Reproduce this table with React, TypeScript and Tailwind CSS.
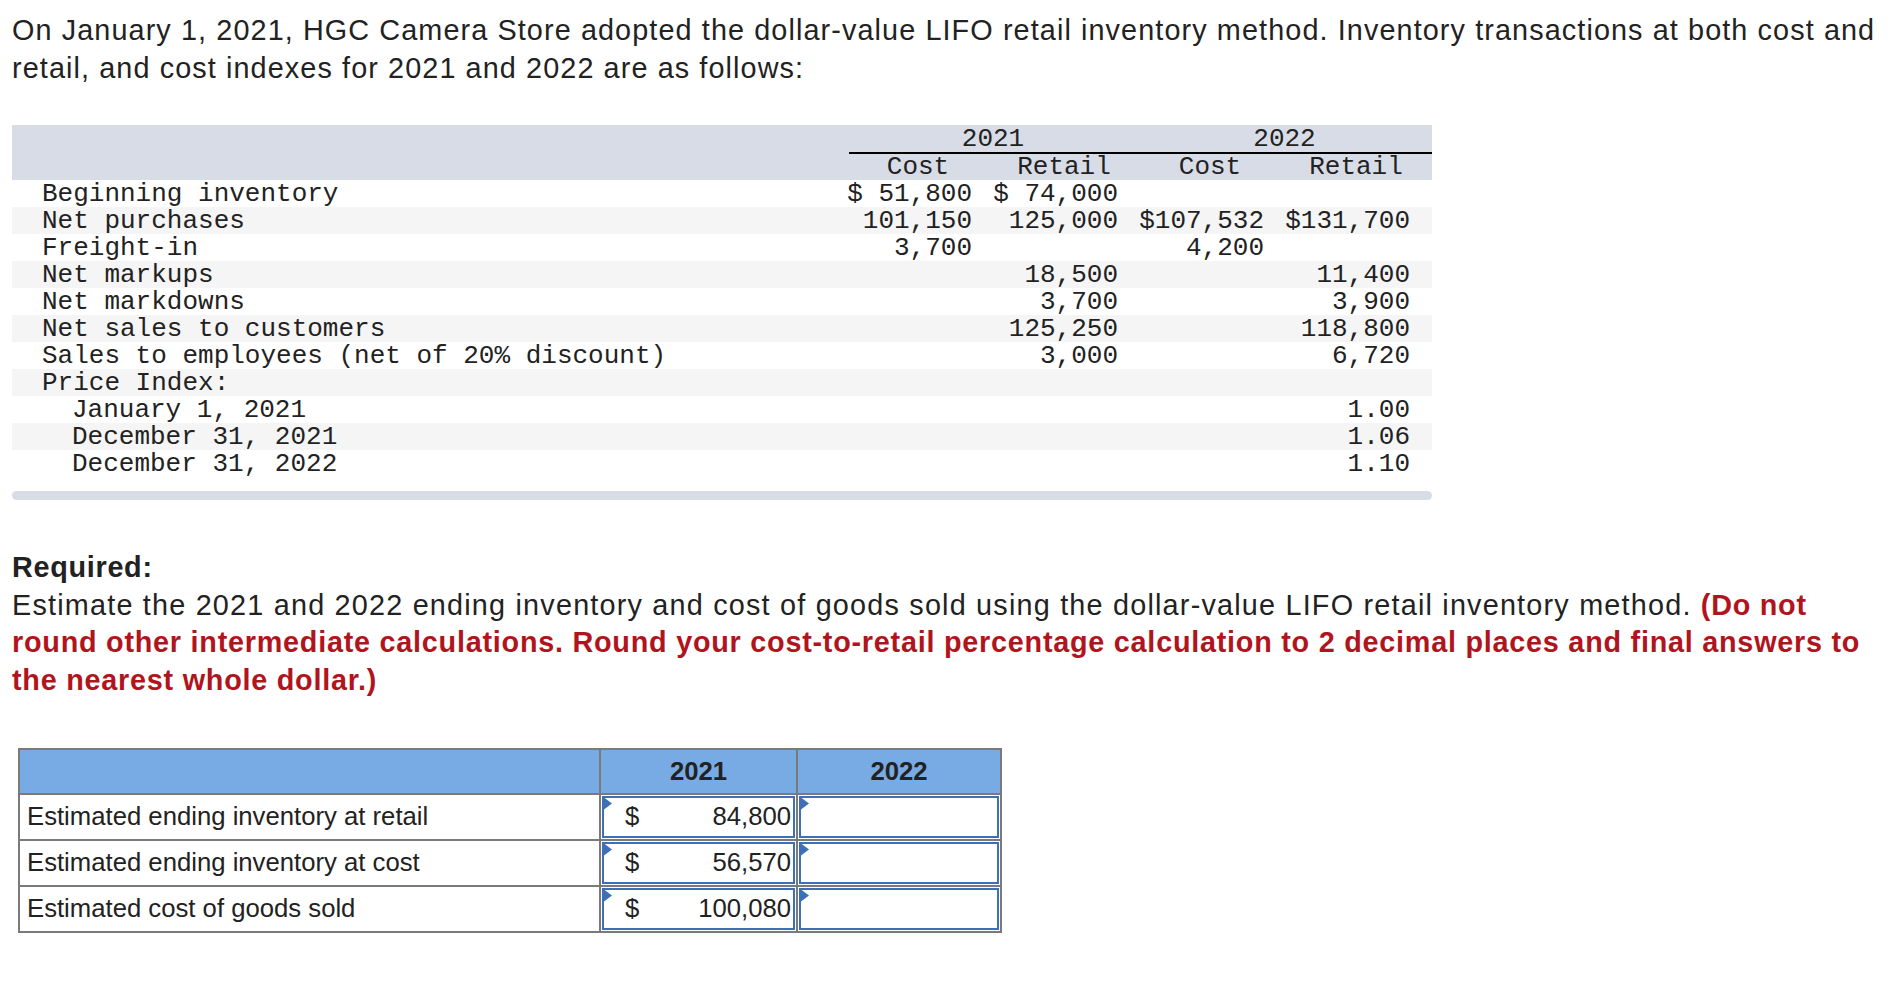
const rows: { label: string; indent?: boolean; v: string[] }[] = [
  { label: "Beginning inventory", v: ["$ 51,800", "$ 74,000", "", ""] },
  { label: "Net purchases", v: ["101,150", "125,000", "$107,532", "$131,700"] },
  { label: "Freight-in", v: ["3,700", "", "4,200", ""] },
  { label: "Net markups", v: ["", "18,500", "", "11,400"] },
  { label: "Net markdowns", v: ["", "3,700", "", "3,900"] },
  { label: "Net sales to customers", v: ["", "125,250", "", "118,800"] },
  { label: "Sales to employees (net of 20% discount)", v: ["", "3,000", "", "6,720"] },
  { label: "Price Index:", v: ["", "", "", ""] },
  { label: "January 1, 2021", indent: true, v: ["", "", "", "1.00"] },
  { label: "December 31, 2021", indent: true, v: ["", "", "", "1.06"] },
  { label: "December 31, 2022", indent: true, v: ["", "", "", "1.10"] },
];

const answers = [
  { label: "Estimated ending inventory at retail", value: "84,800" },
  { label: "Estimated ending inventory at cost", value: "56,570" },
  { label: "Estimated cost of goods sold", value: "100,080" },
];

function InputCell({ dollar, value }: { dollar?: boolean; value?: string }) {
  return (
    <div className="bg-white p-[1px]">
      <div className="relative h-full border-2 border-[#3d70b6] flex items-center justify-between pl-[21px] pr-[2px]">
        {/* little marker in the corner */}
        <svg className="absolute -top-[2px] -left-[2px]" width="10" height="15" viewBox="0 0 10 15">
          <polygon points="0,0 10,7.5 0,15" fill="#3d70b6" />
        </svg>
        <span>{dollar ? "$" : ""}</span>
        <span>{value}</span>
      </div>
    </div>
  );
}

export default function App() {
  return (
    <div className="min-h-screen bg-white px-[12px] pt-[11px] text-[#222] font-['Liberation_Sans',Arial,sans-serif]">
      <p className="text-[28.8px] leading-[38px] tracking-[1.1px]">
        On January 1, 2021, HGC Camera Store adopted the dollar-value LIFO retail inventory method. Inventory transactions at both cost and retail, and cost indexes for 2021 and 2022 are as follows:
      </p>

      {/* data table */}
      <div className="mt-[38px] w-[1420px] font-['Liberation_Mono','Courier_New',monospace] text-[26px] text-[#222]">
        <div className="bg-[#d8dce6] h-[55px]">
          <div className="flex h-[29px] items-end">
            <div className="w-[837px]" />
            <div className="w-[583px] flex border-b-2 border-black">
              <div className="w-[288px] text-center leading-[25px]">2021</div>
              <div className="w-[295px] text-center leading-[25px]">2022</div>
            </div>
          </div>
          <div className="flex h-[26px] items-center leading-none">
            <div className="w-[833px]" />
            {["Cost", "Retail", "Cost", "Retail"].map((h, i) => (
              <div key={i} className="w-[146px] text-center">{h}</div>
            ))}
          </div>
        </div>
        {rows.map((r, i) => (
          <div key={r.label} className={`flex h-[27px] items-center leading-none ${i % 2 === 1 ? "bg-[#f5f5f5]" : "bg-white"}`}>
            <div className={`w-[833px] whitespace-pre ${r.indent ? "pl-[60px]" : "pl-[30px]"}`}>{r.label}</div>
            {r.v.map((v, j) => (
              <div key={j} className="w-[146px] text-right pr-[19px] whitespace-pre">{v}</div>
            ))}
          </div>
        ))}
        <div className="mt-[14px] h-[9px] rounded-full bg-[#d8dce6]" />
      </div>

      <div className="mt-[49px] text-[28.8px] leading-[37.5px]">
        <p className="font-bold tracking-[0.7px]">Required:</p>
        <p className="tracking-[1.2px]">
          Estimate the 2021 and 2022 ending inventory and cost of goods sold using the dollar-value LIFO retail inventory method.{" "}
          <span className="font-bold tracking-[0.75px] text-[#b1141c]">
            (Do not round other intermediate calculations. Round your cost-to-retail percentage calculation to 2 decimal places and final answers to the nearest whole dollar.)
          </span>
        </p>
      </div>

      {/* answer table */}
      <div className="mt-[49px] ml-[6px] w-[984px] grid grid-cols-[579px_195px_202px] gap-[2px] p-[2px] bg-[#7a7a7a] text-[25.7px] leading-none">
        <div className="bg-[#78aae3] h-[43px]" />
        <div className="bg-[#78aae3] h-[43px] flex items-center justify-center font-bold">2021</div>
        <div className="bg-[#78aae3] h-[43px] flex items-center justify-center font-bold">2022</div>
        {answers.map((a) => (
          <div key={a.label} className="contents">
            <div className="bg-white h-[44px] flex items-center pl-[7px]">{a.label}</div>
            <InputCell dollar value={a.value} />
            <InputCell />
          </div>
        ))}
      </div>
    </div>
  );
}
